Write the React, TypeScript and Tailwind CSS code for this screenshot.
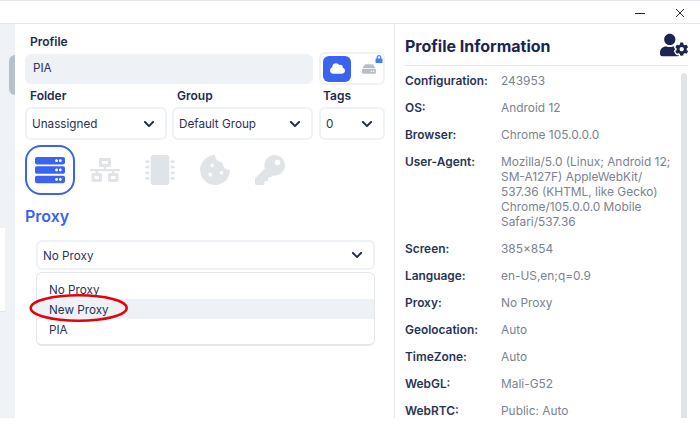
import { FaServer, FaNetworkWired, FaMicrochip, FaCookieBite, FaKey, FaUserCog, FaCloud, FaLock, FaHdd, FaChevronDown } from "react-icons/fa";

const info = [
  ["Configuration:", "243953"],
  ["OS:", "Android 12"],
  ["Browser:", "Chrome 105.0.0.0"],
  ["User-Agent:", "Mozilla/5.0 (Linux; Android 12; SM-A127F) AppleWebKit/ 537.36 (KHTML, like Gecko) Chrome/105.0.0.0 Mobile Safari/537.36"],
  ["Screen:", "385×854"],
  ["Language:", "en-US,en;q=0.9"],
  ["Proxy:", "No Proxy"],
  ["Geolocation:", "Auto"],
  ["TimeZone:", "Auto"],
  ["WebGL:", "Mali-G52"],
  ["WebRTC:", "Public: Auto"],
];

function Select({ value, className }: { value: string; className: string }) {
  return (
    <div className={`flex items-center justify-between rounded-md border-2 border-[#eef1f5] pl-[5px] pr-[10px] text-[11.7px] text-[#2a3354] ${className}`}>
      <span className="mt-[3px]">{value}</span>
      <FaChevronDown className="w-[12px] h-[12px] text-[#1f2a4d]" />
    </div>
  );
}

export default function App() {
  return (
    <div className="w-[700px] h-[426px] overflow-hidden bg-white flex flex-col font-['Inter',sans-serif]">
      <div className="h-[24px] shrink-0 border-t border-b border-[#e3e7ec] flex items-center justify-end pr-[15px] gap-[30px]">
        <div className="w-[10px] h-px mt-[2px] bg-[#222]" />
        <svg className="mt-[2px]" width="10" height="10" viewBox="0 0 10 10" stroke="#333" strokeWidth="1"><path d="M1 1l8 8M9 1l-8 8" /></svg>
      </div>
      <div className="h-[394px] shrink-0 flex">
        <div className="w-[15px] shrink-0 bg-[#eff2f6] flex flex-col">
          <div className="ml-[9px] mt-[31px] w-[6px] h-[40px] rounded-l-md bg-[#b6c1cd]" />
          <div className="mt-[133px] w-[5px] h-[84px] bg-white border-b border-[#dfe3e8]" />
        </div>
        <div className="relative w-[380px] shrink-0 border-r border-[#e3e7ec] pl-[10px] pr-[9px]">
          <div className="pl-[5px] pt-[11px] h-[28px] text-[12px] leading-[14px] font-semibold text-[#1f2a4d]">Profile</div>
          <div className="flex gap-[6px] items-center h-[33px]">
            <div className="flex-1 h-[30px] rounded-md bg-[#eef1f5] pl-2 flex items-center text-[11.7px] text-[#2a3354]">PIA</div>
            <div className="w-[66px] h-[33px] rounded-md border-2 border-[#eef1f5] flex items-center pl-[2px] gap-[11px]">
              <div className="w-[28px] h-[26px] rounded-md bg-[#3b63f0] flex items-center justify-center">
                <FaCloud className="w-[15px] h-[15px] text-white" />
              </div>
              <div className="relative">
                <FaHdd className="w-[14px] h-[14px] text-[#b6bec8]" />
                <FaLock className="absolute -top-[7px] -right-[7px] w-[8px] h-[8px] text-[#3b82f6]" />
              </div>
            </div>
          </div>
          <div className="flex gap-[5px] mt-[4px] text-[12px] leading-[14px] font-semibold text-[#1f2a4d]">
            <div className="w-[142px] pl-[5px]">Folder</div>
            <div className="w-[141px] pl-[5px]">Group</div>
            <div className="ml-[1px] pl-[4px]">Tags</div>
          </div>
          <div className="flex gap-[5px] mt-[4px]">
            <Select value="Unassigned" className="w-[142px] h-[33px]" />
            <Select value="Default Group" className="w-[141px] h-[33px]" />
            <Select value="0" className="w-[66px] h-[33px] ml-[1px]" />
          </div>
          <div className="flex items-center mt-[5px] h-[50px]">
            <div className="w-[50px] h-[50px] rounded-2xl border-2 border-[#3b63f0] flex items-center justify-center">
              <FaServer className="w-[30px] h-[30px] text-[#3b63f0]" />
            </div>
            <div className="flex items-center ml-[15px] gap-[25px] text-[#e0e4e9]">
              <FaNetworkWired className="w-[30px] h-[30px]" />
              <FaMicrochip className="w-[30px] h-[30px]" />
              <FaCookieBite className="w-[30px] h-[30px]" />
              <FaKey className="w-[30px] h-[30px]" />
            </div>
          </div>
          <div className="mt-[11px] h-[20px] text-[16px] leading-[20px] font-semibold text-[#3b63f0]">Proxy</div>
          <div className="ml-[11px] mt-[14px] w-[339px]">
            <Select value="No Proxy" className="w-full h-[30px]" />
            <div className="mt-[2px] h-[74px] rounded-md border border-[#e3e7ec] border-b-2 pt-[6px] text-[11.7px] text-[#2a3354]">
              <div className="h-[20px] leading-[22px] pl-[12px]">No Proxy</div>
              <div className="h-[20px] leading-[22px] pl-[12px] bg-[#eef1f5]">New Proxy</div>
              <div className="h-[20px] leading-[22px] pl-[12px]">PIA</div>
            </div>
          </div>
          <svg className="absolute left-[14px] top-[270px]" width="102" height="30" viewBox="0 0 102 30" fill="none">
            <ellipse cx="49.7" cy="14" rx="48" ry="12.7" stroke="#e8000b" strokeWidth="2.5" />
          </svg>
        </div>
        <div className="relative flex-1 pl-[10px] pr-[12px] overflow-hidden">
          <div className="h-[42px] pt-[2px] border-b border-[#e3e7ec] flex items-center justify-between text-[#1c2550]">
            <div className="text-[16px] font-bold">Profile Information</div>
            <FaUserCog className="w-[28px] h-[24px] mb-[2px]" />
          </div>
          <div className="mt-[7px] pr-[8px]">
            {info.map(([k, v]) => (
              <div key={k} className="flex mb-[12px] text-[11.9px] leading-[15px]">
                <div className="w-[96px] shrink-0 font-semibold text-[#2a3354]">{k}</div>
                <div className="text-[#7b8390]">{v}</div>
              </div>
            ))}
          </div>
          <div className="absolute right-[13px] top-[49px] bottom-0 w-[6px] rounded-t bg-[#e0e4e9]" />
        </div>
      </div>
    </div>
  );
}
